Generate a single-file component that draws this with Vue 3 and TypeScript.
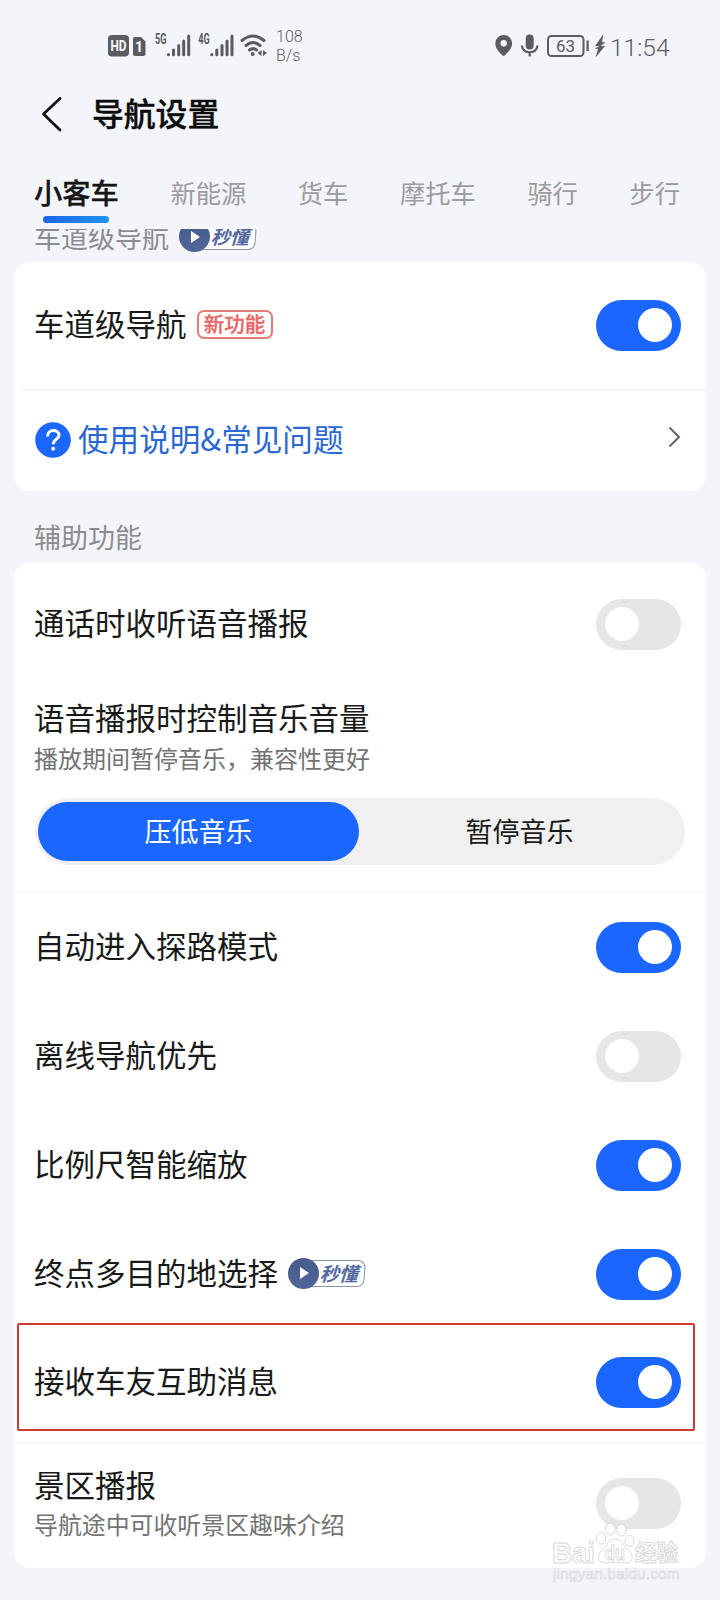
<script setup lang="ts">
import { ref } from 'vue'

interface Row {
  label: string
  on: boolean
  badge?: boolean
  marked?: boolean
}

const tabs = ['小客车', '新能源', '货车', '摩托车', '骑行', '步行']
const activeTab = ref(0)
const laneOn = ref(true)
const callOn = ref(false)
const scenicOn = ref(false)
const musicMode = ref(0)
const modes = ['压低音乐', '暂停音乐']
const rows = ref<Row[]>([
  { label: '自动进入探路模式', on: true },
  { label: '离线导航优先', on: false },
  { label: '比例尺智能缩放', on: true },
  { label: '终点多目的地选择', on: true, badge: true },
  { label: '接收车友互助消息', on: true, marked: true },
])
</script>

<template>
  <main class="screen">
    <div class="status">
      <svg class="status-left" width="162" height="40" viewBox="107 25 162 40">
        <rect x="108" y="35" width="21" height="21.5" rx="4" fill="#5b5b60" />
        <text x="118.5" y="51" class="hd" text-anchor="middle" textLength="16" lengthAdjust="spacingAndGlyphs">HD</text>
        <path d="M135 37h6l4.5 4.5V54a2 2 0 0 1-2 2H135a2 2 0 0 1-2-2V39a2 2 0 0 1 2-2z" fill="#5b5b60" />
        <text x="139" y="51.500" class="hd" text-anchor="middle">1</text>
        <g v-for="(net, i) in ['5G', '4G']" :key="net" :transform="`translate(${i * 43.3} 0)`">
          <text x="155" y="43.500" class="net" textLength="11.500" lengthAdjust="spacingAndGlyphs">{{ net }}</text>
          <path d="M168.500 54.500v.2M173.500 50v4.700M178.700 45.500v9.200M183.700 41v13.700M188.700 36v18.700" stroke="#5b5b60" stroke-width="3" stroke-linecap="round" />
        </g>
        <path d="M242 40.500q11-9 22 0M246 45.500q7-6 14 0M249.500 50q3.500-2.800 7 0" fill="none" stroke="#5b5b60" stroke-width="3" stroke-linecap="round" />
        <circle cx="252.700" cy="54" r="2" fill="#5b5b60" />
        <path d="M261.500 50v6l-4-3zM263 50v6l4-3z" fill="#5b5b60" />
      </svg>
      <div class="speed"><span>108</span><span>B/s</span></div>
      <svg class="status-right" width="112" height="40" viewBox="495 25 112 40">
        <path d="M503.700 35a8.300 8.300 0 0 0-8.400 8.400c0 5 4.500 9.500 8.400 12.900 3.900-3.400 8.400-7.900 8.400-12.900a8.300 8.300 0 0 0-8.400-8.400zm0 5a3.200 3.200 0 1 1 0 6.400 3.200 3.200 0 0 1 0-6.400z" fill="#5b5b60" />
        <rect x="525.700" y="34.500" width="8" height="15" rx="4" fill="#5b5b60" />
        <path d="M522 45.500c0 9 15.400 9 15.400 0M529.700 52v4.500" fill="none" stroke="#5b5b60" stroke-width="2.200" />
        <rect x="548" y="36" width="35.500" height="20" rx="3.500" fill="none" stroke="#5b5b60" stroke-width="2" />
        <text x="565.500" y="52" class="charge" text-anchor="middle">63</text>
        <path d="M587.600 40.500v10.500" stroke="#5b5b60" stroke-width="2.200" />
        <path d="M603.500 34l-8.500 12h4.500l-4.500 2.500 3 .5-2.500 8.500 9.500-11.500h-4.500l5-3.500-3.500-.5z" fill="#5b5b60" />
      </svg>
      <span class="clock">11:54</span>
    </div>

    <header class="head">
      <svg width="22" height="36" viewBox="0 0 22 36"><path d="M19 2.500L2.500 18 19 34" fill="none" stroke="#111" stroke-width="2.800" stroke-linecap="round" stroke-linejoin="round" /></svg>
      <h1>导航设置</h1>
    </header>

    <nav class="tabs">
      <span v-for="(t, i) in tabs" :key="t" class="tab" :class="{ active: i === activeTab }" @click="activeTab = i">{{ t }}</span>
    </nav>

    <section class="scroll">
      <div class="group first">
        <span>车道级导航</span>
        <span class="tip"><i class="play"></i><b>秒懂</b></span>
      </div>
      <div class="card lane">
        <div class="row">
          <span class="label">车道级导航</span><span class="new">新功能</span>
          <button class="switch" :class="{ on: laneOn }" @click="laneOn = !laneOn"><i></i></button>
        </div>
        <div class="row help">
          <svg class="ask" width="36" height="36" viewBox="0 0 36 36">
            <circle cx="18" cy="18" r="17.800" fill="#1a66ff" />
            <path d="M12.500 14.500c0-8 11.500-7.500 11.500-1.300 0 4-5.700 4-5.700 9" fill="none" stroke="#fff" stroke-width="3" />
            <circle cx="18.200" cy="26.700" r="2" fill="#fff" />
          </svg>
          <span class="link">使用说明&amp;常见问题</span>
          <svg class="more" width="13" height="22" viewBox="0 0 13 22"><path d="M1.500 1.500L11 11l-9.500 9.500" fill="none" stroke="#666" stroke-width="2" /></svg>
        </div>
      </div>
      <div class="group">辅助功能</div>
      <div class="card">
        <div class="row call">
          <span class="label">通话时收听语音播报</span>
          <button class="switch" :class="{ on: callOn }" @click="callOn = !callOn"><i></i></button>
        </div>
        <div class="music">
          <div class="label">语音播报时控制音乐音量</div>
          <div class="sub">播放期间暂停音乐，兼容性更好</div>
          <div class="segment">
            <span v-for="(m, i) in modes" :key="m" :class="{ chosen: i === musicMode }" @click="musicMode = i">{{ m }}</span>
          </div>
        </div>
        <div class="list">
          <div v-for="r in rows" :key="r.label" class="row item" :class="{ marked: r.marked }">
            <span class="label">{{ r.label }}</span>
            <span v-if="r.badge" class="tip"><i class="play"></i><b>秒懂</b></span>
            <button class="switch" :class="{ on: r.on }" @click="r.on = !r.on"><i></i></button>
          </div>
        </div>
        <div class="row scenic">
          <div class="about">
            <div class="label">景区播报</div>
            <div class="sub">导航途中可收听景区趣味介绍</div>
          </div>
          <button class="switch" :class="{ on: scenicOn }" @click="scenicOn = !scenicOn"><i></i></button>
        </div>
      </div>
    </section>

    <svg class="watermark" width="136" height="68" viewBox="548 1518 136 68">
      <g fill="#fff" stroke="#d2d2d6" stroke-width="1">
        <ellipse cx="601" cy="1538" rx="4.800" ry="6" />
        <ellipse cx="610.500" cy="1529" rx="4.800" ry="6" />
        <ellipse cx="621.500" cy="1530" rx="4.800" ry="6" />
        <ellipse cx="629.500" cy="1541" rx="4.500" ry="5.500" />
        <path d="M615 1539c7 0 8 6 12 10 8 7 6 14-2 14-5 0-5-1-10-1s-5 1-10 1c-8 0-9-8-2-14 5-4 5-10 12-10z" />
        <text x="552" y="1562.500" class="wm-name" textLength="43" lengthAdjust="spacingAndGlyphs">Bai</text>
        <text x="605" y="1560" class="wm-du" textLength="20" lengthAdjust="spacingAndGlyphs">du</text>
        <text x="635" y="1561" class="wm-cn" textLength="43" lengthAdjust="spacingAndGlyphs">经验</text>
        <text x="553" y="1579" class="wm-url" textLength="127" lengthAdjust="spacingAndGlyphs">jingyan.baidu.com</text>
      </g>
    </svg>
  </main>
</template>

<style>
body { margin: 0; background: #f4f5fa; }
</style>

<style scoped>
.screen {
  position: relative; width: 720px; height: 1600px; overflow: hidden; background: #f4f5fa;
  font-family: "Noto Sans CJK SC", sans-serif; color: #191919; box-sizing: border-box;
}
.screen * { box-sizing: border-box; }
.status { display: flex; align-items: center; height: 90px; padding-left: 107px; color: #5b5b60; font-family: Roboto, sans-serif; }
.hd { font: 700 14px Roboto, sans-serif; fill: #fff; }
.net { font: 700 14px Roboto, sans-serif; fill: #5b5b60; }
.charge { font: 400 17px Roboto, sans-serif; fill: #5b5b60; }
.speed { display: flex; flex-direction: column; width: 28px; margin-left: 7px; font-size: 16px; font-weight: 300; line-height: 19px; padding-top: 2px; white-space: nowrap; }
.status-right { margin-left: 191px; }
.clock { margin-left: 3px; padding-top: 4px; font-size: 24.500px; font-weight: 300; }
.head { display: flex; align-items: center; height: 50px; padding-left: 41px; }
.head svg { margin-top: -2px; }
h1 { margin: -6px 0 0 29px; font-size: 31.800px; line-height: 48px; font-weight: 500; color: #0c0c0c; -webkit-text-stroke: .4px #0c0c0c; }
.tabs { display: flex; align-items: center; height: 89px; padding: 19px 40px 0 34px; justify-content: space-between; font-size: 25.300px; line-height: 66px; color: #9b9b9f; }
.tab { position: relative; display: block; height: 70px; }
.tab.active { font-size: 28.300px; font-weight: 500; color: #161616; -webkit-text-stroke: .3px #161616; }
.tab.active::after { content: ""; position: absolute; left: 9px; right: 10px; bottom: 6px; height: 7px; border-radius: 4px; background: linear-gradient(90deg, #1d65ee, #2193ef); }
.scroll { height: 1371px; overflow: hidden; padding: 0 14px; }
.group { display: flex; align-items: center; height: 71px; padding: 0 20px; padding-top: 21px; font-size: 27px; line-height: 40px; color: #8c8c90; }
.group.first { height: 48px; margin-top: -15px; padding-top: 0; padding-bottom: 3px; }
.card { background: #fff; border-radius: 16px; }
.row { display: flex; align-items: center; height: 127px; padding: 0 25px 0 20px; }
.lane .row + .row { height: 102px; border-top: 1px solid #f1f1f3; margin-left: 6px; padding-left: 15px; }
.label { font-size: 30.500px; line-height: 44px; white-space: nowrap; }
.row > .label { padding-bottom: 5px; }
.new { margin-left: 10px; width: 76px; height: 29px; margin-top: -3px; border: 2px solid #e37b7b; border-radius: 7px; font-size: 20.500px; line-height: 22px; font-weight: 500; text-align: center; color: #e76767; -webkit-text-stroke: .3px #e76767; white-space: nowrap; }
.switch { flex: none; margin-left: auto; width: 85px; height: 51px; padding: 8px 9px; border: 0; border-radius: 26px; background: #e6e6e8; display: flex; }
.switch i { width: 34px; height: 34px; border-radius: 50%; background: #fff; }
.switch.on { background: #1a66ff; justify-content: flex-end; }
.ask { margin-top: -1px; }
.link { margin-left: 7px; padding-bottom: 5px; font-size: 30.600px; line-height: 44px; color: #2a67d4; }
.more { margin-left: auto; margin-top: -7px; }
.call { height: 124px; }
.music { height: 207px; padding: 9px 21px 0 20px; border-bottom: 1px solid #f3f3f5; }
.sub { font-size: 24px; line-height: 34px; color: #737373; white-space: nowrap; }
.music .sub { margin-top: 2px; }
.segment { display: flex; margin: 23px 0 0 1px; width: 650px; height: 67px; padding: 4px 5px 4px 3px; border-radius: 34px; background: #f0f0f0; font-size: 27px; line-height: 58px; text-align: center; }
.segment span { flex: 1; border-radius: 30px; }
.segment .chosen { background: #1a66ff; color: #fff; }
.list { height: 551px; border-bottom: 1px solid #f1f1f3; }
.item { height: 108.900px; }
.marked { height: 108px; margin: -6px 11px 0 3px; padding: 12px 12px 0 15px; border: 2px solid #cd3b35; border-radius: 2px; }
.scenic { height: 124px; padding-bottom: 6px; }
.about { margin-top: -3px; }
.about .sub { margin-top: 1px; font-size: 23.900px; }
.tip { display: flex; align-items: center; margin-left: 10px; }
.row .tip { margin-top: -2px; }
.play { position: relative; z-index: 1; width: 31px; height: 31px; border-radius: 50%; background: linear-gradient(#465c8c, #52659a); }
.play::after { content: ""; position: absolute; left: 12px; top: 9.500px; border-left: 9px solid #fff; border-top: 6px solid transparent; border-bottom: 6px solid transparent; }
.tip b { width: 55px; height: 27px; margin-left: -9px; padding-left: 9px; border: 1px solid #8b94a5; border-radius: 3px 8px 7px 3px; transform: skewX(-4deg); background: #fff; color: #52689c; font-size: 19px; line-height: 23px; font-weight: 700; font-style: italic; white-space: nowrap; }
.watermark { position: absolute; left: 548px; top: 1518px; opacity: .85; }
.wm-name { font: 700 30px "Liberation Sans", sans-serif; }
.wm-du { font: 700 21px "Liberation Sans", sans-serif; }
.wm-cn { font: 700 23px "Noto Sans CJK SC", sans-serif; }
.wm-url { font: 400 15px "Liberation Sans", sans-serif; stroke-width: .7px; }
</style>
